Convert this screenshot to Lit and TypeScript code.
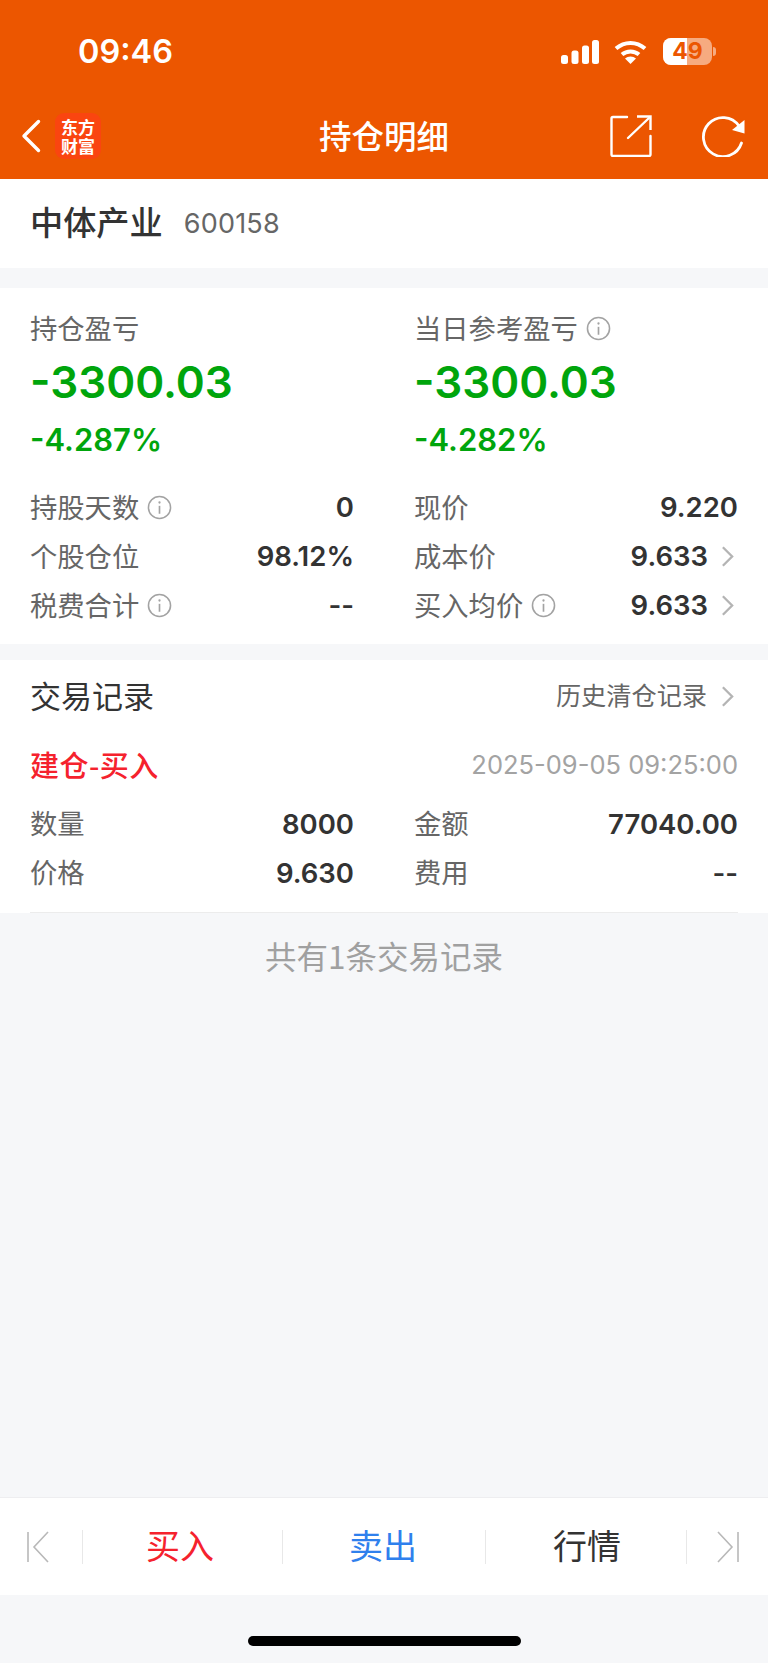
import { LitElement, html, css } from "lit";
import { customElement } from "lit/decorators.js";

const info = html`<svg class="info" viewBox="0 0 24 24"><circle cx="12" cy="12" r="10.6" fill="none" stroke="#a3a3a3" stroke-width="1.5"/><circle cx="12" cy="7.2" r="1.1" fill="#a3a3a3"/><path d="M12 10.4V18" stroke="#a3a3a3" stroke-width="1.6" fill="none"/></svg>`;
const chev = html`<svg class="chev" viewBox="0 0 14 24"><path d="M2 2l10 10L2 22" fill="none" stroke="#b4b4b4" stroke-width="2.500"/></svg>`;

type Row = { l: string; v: string; i?: boolean; c?: boolean };
const left: Row[] = [
  { l: "持股天数", v: "0", i: true },
  { l: "个股仓位", v: "98.12%" },
  { l: "税费合计", v: "--", i: true },
];
const right: Row[] = [
  { l: "现价", v: "9.220" },
  { l: "成本价", v: "9.633", c: true },
  { l: "买入均价", v: "9.633", i: true, c: true },
];
const trade: Row[] = [
  { l: "数量", v: "8000" },
  { l: "金额", v: "77040.00" },
  { l: "价格", v: "9.630" },
  { l: "费用", v: "--" },
];

@customElement("app-root")
export class AppRoot extends LitElement {
  static styles = css`
    :host {
      display: block;
      width: 768px;
      height: 1663px;
      background: #f6f7f9;
      font-family: "Noto Sans CJK SC", sans-serif;
      color: #333;
      overflow: hidden;
    }
    .page { display: flex; flex-direction: column; height: 100%; }
    .num { font-family: Inter, "Liberation Sans", sans-serif; }
    .top { background: #ec5600; color: #fff; height: 179px; flex: none; }
    .status { height: 101px; display: flex; align-items: center; padding: 2px 52px 0 78px; box-sizing: border-box; }
    .time { font-size: 32.5px; font-weight: 600; flex: 1; line-height: 1; padding-top: 2px; }
    .status-icons { display: flex; align-items: center; gap: 15px; }
    .battery { position: relative; width: 49px; height: 27px; border-radius: 8px; overflow: hidden; background: rgba(255,255,255,.5); }
    .battery i { display: block; width: 24px; height: 100%; background: #fff; }
    .battery b { position: absolute; inset: 0; text-align: center; font: 700 23px/27px Inter, sans-serif; color: #ec5600; }
    .batt-wrap { display: flex; align-items: center; gap: 1px; margin-left: 1px; }
    .nub { width: 3px; height: 9px; border-radius: 0 3px 3px 0; background: rgba(255,255,255,.5); }
    .nav { height: 78px; padding-bottom: 8px; box-sizing: border-box; display: grid; grid-template-columns: 1fr auto 1fr; align-items: center; }
    .nav-l { display: flex; align-items: center; padding-left: 21px; gap: 14px; }
    .logo { width: 46px; height: 46px; border-radius: 9px; background: #fa4510; display: flex; align-items: center; justify-content: center; font-size: 17px; line-height: 19px; font-weight: 700; }
    .logo div { width: 34px; text-align: center; }
    .title { font-size: 32.5px; font-weight: 500; line-height: 1; padding-bottom: 2px; }
    .nav-r { display: flex; align-items: center; justify-content: flex-end; padding-right: 22px; gap: 49px; }
    .stock { background: #fff; height: 89px; flex: none; display: flex; align-items: center; padding-left: 30px; gap: 21px; margin-bottom: 20px; }
    .stock b { font-size: 33.200px; font-weight: 500; color: #333; padding-bottom: 6px; }
    .stock span { font-size: 27px; color: #666; letter-spacing: .2px; }
    .card { background: #fff; flex: none; box-sizing: border-box; padding: 20px 30px 0; height: 356px; margin-bottom: 16px; }
    .cols { display: grid; grid-template-columns: 324px 324px; column-gap: 60px; }
    .lab { font-size: 27.300px; line-height: 40px; height: 40px; color: #666; display: flex; align-items: center; gap: 8px; white-space: nowrap; }
    .lab span { padding-bottom: 3px; }
    .big { font-size: 44px; font-weight: 600; line-height: 68px; color: #00a50c; }
    .pct { font-size: 31px; font-weight: 600; line-height: 48px; color: #00a50c; margin-bottom: 18.500px; }
    .row { display: flex; align-items: center; height: 49px; justify-content: space-between; }
    .val { font-size: 27.500px; font-weight: 600; color: #333; margin-left: auto; }
    .info { width: 25px; height: 25px; flex: none; }
    .chev { width: 13px; height: 23px; flex: none; margin-left: 13px; margin-right: 4px; }
    .trades { background: #fff; flex: none; height: 253px; box-sizing: border-box; padding: 0 30px; }
    .trades-inner { height: 100%; border-bottom: 1px solid #ececec; box-sizing: border-box; }
    .thead { height: 72px; display: flex; align-items: center; justify-content: space-between; }
    .thead b { font-size: 31px; font-weight: 400; color: #333; padding-bottom: 4px; }
    .thead span { font-size: 25.200px; color: #666; display: flex; align-items: center; }
    .thead em { font-style: normal; padding-bottom: 4px; }
    .thead .chev { margin-left: 14px; margin-right: 4px; }
    .tsub { height: 66px; display: flex; align-items: center; justify-content: space-between; margin-bottom: 1px; }
    .tsub b { font-size: 29px; font-weight: 500; color: #f5222d; letter-spacing: .5px; padding-bottom: 2px; }
    .tsub span { font-size: 25.500px; color: #a3a3a3; padding-bottom: 2px; }
    .tgrid { display: grid; grid-template-columns: 324px 324px; column-gap: 60px; }
    .foot { height: 84px; flex: none; display: flex; align-items: center; justify-content: center; font-size: 31.500px; color: #a0a0a0; }
    .spacer { flex: 1; }
    .bar { background: #fff; height: 98px; flex: none; border-top: 1px solid #eeeef0; box-sizing: border-box; display: grid; grid-template-columns: 83px 200px 203px 201px 81px; align-items: center; }
    .cell { height: 34px; display: flex; align-items: center; justify-content: center; font-size: 34px; line-height: 34px; border-right: 1px solid #e8e8e8; box-sizing: border-box; }
    .cell:last-child { border-right: 0; }
    .cell span { padding-bottom: 4px; }
    .first { padding-right: 6px; }
    .buy { color: #f5222d; padding-right: 5px; }
    .sell { color: #2f80ed; padding-right: 2px; }
    .quote { padding-left: 2px; }
    .home { height: 68px; flex: none; display: flex; justify-content: center; align-items: flex-start; padding-top: 41px; box-sizing: border-box; }
    .home i { display: block; width: 273px; height: 10px; border-radius: 5px; background: #000; }
  `;

  private row(r: Row) {
    return html`<div class="row"><div class="lab"><span>${r.l}</span>${r.i ? info : ""}</div><div class="val num">${r.v}</div>${r.c ? chev : ""}</div>`;
  }

  render() {
    return html`<div class="page">
      <div class="top">
        <div class="status">
          <div class="time num">09:46</div>
          <div class="status-icons">
            <svg width="38" height="24" viewBox="0 0 38 24"><g fill="#fff"><rect x="0" y="15" width="7" height="9" rx="2.500"/><rect x="10.500" y="10.500" width="7" height="13.500" rx="2.500"/><rect x="21" y="5.500" width="7" height="18.500" rx="2.500"/><rect x="31" y="0" width="7" height="24" rx="2.500"/></g></svg>
            <svg width="33" height="24" viewBox="0 0 33 24"><g fill="none" stroke="#fff" stroke-width="4"><path d="M2 8.600C10.400 1 22.600 1 31 8.600"/><path d="M8 14.600C12.800 10.400 20.200 10.400 25 14.600"/></g><path d="M16.500 24l-5.500-5.500c3-2.700 8-2.700 11 0z" fill="#fff"/></svg>
            <div class="batt-wrap"><div class="battery"><i></i><b>49</b></div><div class="nub"></div></div>
          </div>
        </div>
        <div class="nav">
          <div class="nav-l">
            <svg width="20" height="34" viewBox="0 0 20 34"><path d="M17.500 2.500L3 17l14.500 14.500" fill="none" stroke="#fff" stroke-width="3.400" stroke-linecap="round" stroke-linejoin="round"/></svg>
            <div class="logo"><div>东方财富</div></div>
          </div>
          <div class="title">持仓明细</div>
          <div class="nav-r">
            <svg width="42" height="42" viewBox="0 0 42 42"><g fill="none" stroke="#fff" stroke-width="2.400" stroke-linecap="round"><path d="M17 2H3a1.500 1.500 0 0 0-1.500 1.500v36A1.500 1.500 0 0 0 3 41h36a1.500 1.500 0 0 0 1.500-1.500V21"/><path d="M18 23L39 3"/><path d="M27 1.500h13.500V15" stroke-linecap="butt"/></g></svg>
            <svg width="45" height="42" viewBox="0 0 45 42"><path d="M38 11A19.500 19.500 0 1 0 40.500 28" fill="none" stroke="#fff" stroke-width="2.800" stroke-linecap="round"/><path d="M43.500 5v13.500L31 15z" fill="#fff"/></svg>
          </div>
        </div>
      </div>

      <div class="stock"><b>中体产业</b><span class="num">600158</span></div>

      <div class="card">
        <div class="cols">
          <div>
            <div class="lab"><span>持仓盈亏</span></div>
            <div class="big num">-3300.03</div>
            <div class="pct num">-4.287%</div>
            ${left.map((r) => this.row(r))}
          </div>
          <div>
            <div class="lab"><span>当日参考盈亏</span>${info}</div>
            <div class="big num">-3300.03</div>
            <div class="pct num">-4.282%</div>
            ${right.map((r) => this.row(r))}
          </div>
        </div>
      </div>

      <div class="trades"><div class="trades-inner">
        <div class="thead"><b>交易记录</b><span><em>历史清仓记录</em>${chev}</span></div>
        <div class="tsub"><b>建仓-买入</b><span class="num">2025-09-05 09:25:00</span></div>
        <div class="tgrid">${trade.map((r) => this.row(r))}</div>
      </div></div>

      <div class="foot">共有1条交易记录</div>
      <div class="spacer"></div>

      <div class="bar">
        <div class="cell first"><svg width="22" height="32" viewBox="0 0 22 32"><g fill="none" stroke="#b8b8b8" stroke-width="1.600"><path d="M1 1v30"/><path d="M21 1L7 16l14 15"/></g></svg></div>
        <div class="cell buy"><span>买入</span></div>
        <div class="cell sell"><span>卖出</span></div>
        <div class="cell quote"><span>行情</span></div>
        <div class="cell"><svg width="22" height="32" viewBox="0 0 22 32"><g fill="none" stroke="#b8b8b8" stroke-width="1.600"><path d="M21 1v30"/><path d="M1 1l14 15L1 31"/></g></svg></div>
      </div>
      <div class="home"><i></i></div>
    </div>`;
  }
}
